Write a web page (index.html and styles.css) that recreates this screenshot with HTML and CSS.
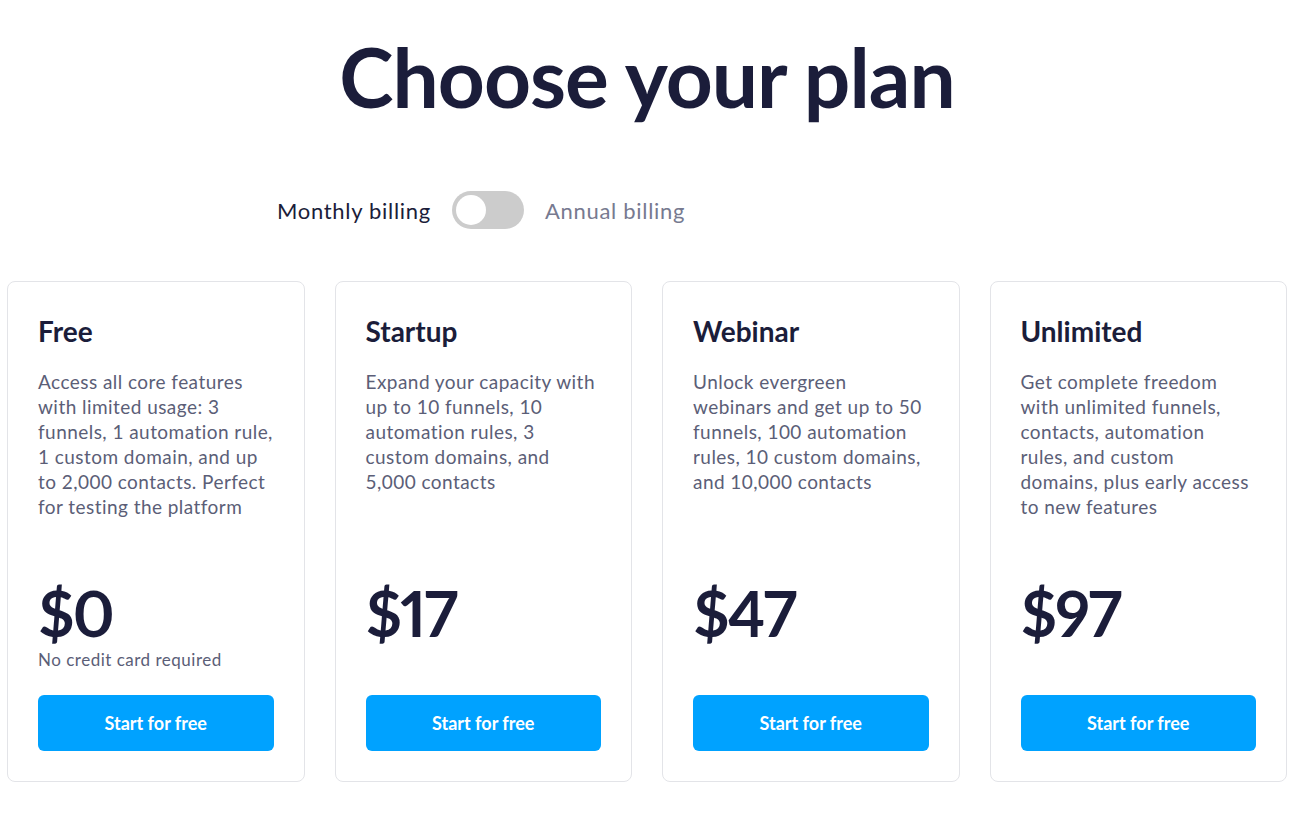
FILE: index.html
```html
<!DOCTYPE html>
<html lang="en">
<head>
    <meta charset="UTF-8">
    <meta name="viewport" content="width=device-width, initial-scale=1.0">
    <title>Choose your plan</title>
    <link rel="stylesheet" href="styles.css">
</head>
<body>
    <div class="pricing">
        <!-- Title -->
        <h1 class="pricing-title">Choose your plan</h1>

        <!-- Billing switch -->
        <div class="billing-switch">
            <span class="billing-label billing-active">Monthly billing</span>
            <span class="toggle"><span class="toggle-knob"></span></span>
            <span class="billing-label">Annual billing</span>
        </div>

        <!-- Plans -->
        <div class="plans">
            <div class="plan">
                <h2 class="plan-name">Free</h2>
                <p class="plan-desc">Access all core features with limited usage: 3 funnels, 1 automation rule, 1 custom domain, and up to 2,000 contacts. Perfect for testing the platform</p>
                <div class="plan-price">$0</div>
                <div class="plan-note">No credit card required</div>
                <button class="plan-button">Start for free</button>
            </div>
            <div class="plan">
                <h2 class="plan-name">Startup</h2>
                <p class="plan-desc">Expand your capacity with up to 10 funnels, 10 automation rules, 3 custom domains, and 5,000 contacts</p>
                <div class="plan-price">$17</div>
                <div class="plan-note"></div>
                <button class="plan-button">Start for free</button>
            </div>
            <div class="plan">
                <h2 class="plan-name">Webinar</h2>
                <p class="plan-desc">Unlock evergreen webinars and get up to 50 funnels, 100 automation rules, 10 custom domains, and 10,000 contacts</p>
                <div class="plan-price">$47</div>
                <div class="plan-note"></div>
                <button class="plan-button">Start for free</button>
            </div>
            <div class="plan">
                <h2 class="plan-name">Unlimited</h2>
                <p class="plan-desc">Get complete freedom with unlimited funnels, contacts, automation rules, and custom domains, plus early access to new features</p>
                <div class="plan-price">$97</div>
                <div class="plan-note"></div>
                <button class="plan-button">Start for free</button>
            </div>
        </div>
    </div>
</body>
</html>
```

FILE: styles.css
```css
body {
    margin: 0;
    background: #ffffff;
    color: #1b1d3a;
    font-family: Lato, "Open Sans", sans-serif;
}

/* Page wrapper */
.pricing {
    width: 1280px;
    margin: 0 7px;
    padding-top: 24px;
}

.pricing-title {
    margin: 0;
    text-align: center;
    font-size: 82px;
    font-weight: 700;
    line-height: 104px;
    letter-spacing: -1px;
}

/* Monthly / annual switch */
.billing-switch {
    display: flex;
    align-items: center;
    gap: 21px;
    padding-left: 270px;
    margin-top: 63px;
}

.billing-label {
    font-size: 22px;
    letter-spacing: 0.7px;
    color: #777a90;
}

.billing-active {
    color: #1b1d3a;
}

.toggle {
    display: flex;
    align-items: center;
    width: 72px;
    height: 38px;
    border-radius: 19px;
    background: #cccccc;
    padding: 0 4px;
    box-sizing: border-box;
}

.toggle-knob {
    width: 30px;
    height: 30px;
    border-radius: 50%;
    background: #ffffff;
}

/* Plan cards */
.plans {
    display: grid;
    grid-template-columns: repeat(4, 1fr);
    gap: 30px;
    margin-top: 52px;
}

.plan {
    display: flex;
    flex-direction: column;
    border: 1px solid #e3e4e8;
    border-radius: 8px;
    padding: 30px;
}

.plan-name {
    margin: 0;
    font-size: 28px;
    font-weight: 700;
    line-height: 38px;
}

.plan-desc {
    margin: 19px 0 0;
    font-size: 19px;
    line-height: 25px;
    letter-spacing: 0.45px;
    color: #5b5e77;
    min-height: 209px;
}

.plan-price {
    font-size: 63px;
    font-weight: 700;
    line-height: 70px;
    letter-spacing: -2px;
    font-variant-numeric: proportional-nums;
}

.plan-note {
    min-height: 24px;
    font-size: 17px;
    line-height: 24px;
    letter-spacing: 0.5px;
    color: #5b5e77;
}

.plan-button {
    margin-top: 23px;
    height: 56px;
    border: none;
    border-radius: 6px;
    background: #00a2ff;
    color: #ffffff;
    font-family: inherit;
    font-size: 18px;
    font-weight: 700;
    cursor: pointer;
}
```
